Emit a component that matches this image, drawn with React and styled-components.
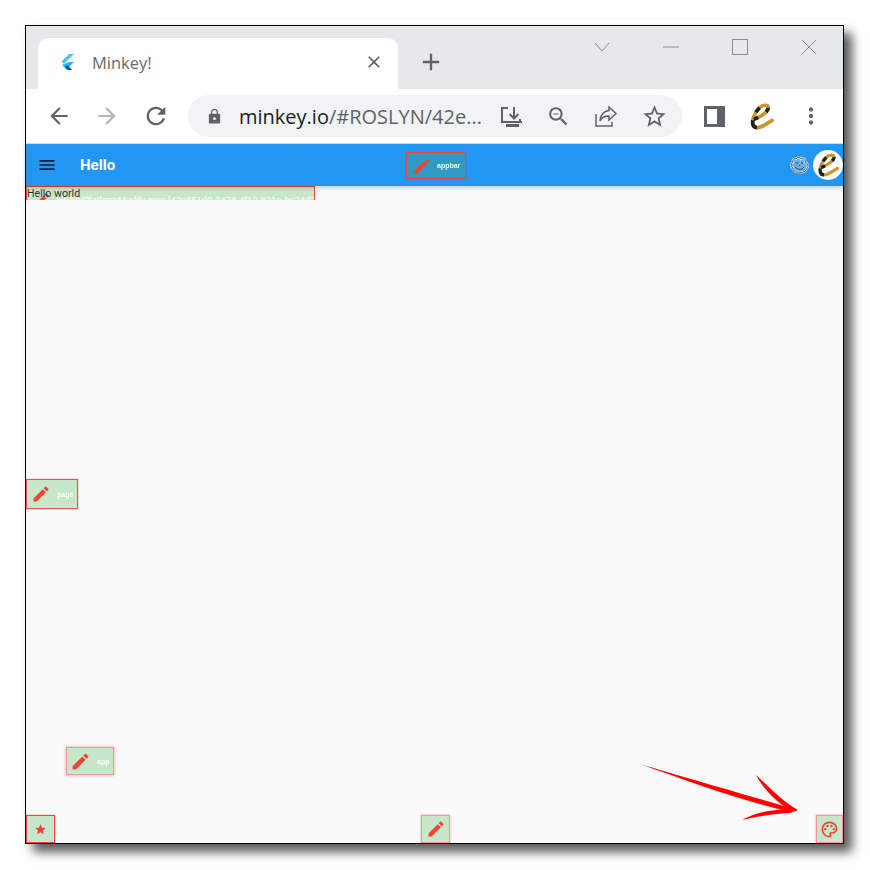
import styled, { createGlobalStyle } from 'styled-components';
import {
  MdEdit,
  MdStar,
  MdMenu,
  MdClose,
  MdAdd,
  MdArrowBack,
  MdArrowForward,
  MdRefresh,
  MdLock,
  MdZoomOut,
  MdStarBorder,
  MdMoreVert,
  MdOutlinePalette,
} from 'react-icons/md';

const GlobalStyle = createGlobalStyle`
  html, body {
    margin: 0;
    padding: 0;
    background: #fff;
    font-family: 'Roboto', 'Liberation Sans', sans-serif;
  }
`;

const Page = styled.div`
  width: 870px;
  height: 870px;
  padding: 25px 0 0 25px;
  box-sizing: border-box;
  overflow: hidden;
`;

const Window = styled.div`
  position: relative;
  width: 819px;
  height: 819px;
  box-sizing: border-box;
  border: 1px solid #000;
  display: flex;
  flex-direction: column;
  background: #fafafa;
  box-shadow: 8px 8px 10px rgba(0, 0, 0, 0.65);
`;

const TabStrip = styled.div`
  height: 63px;
  flex: none;
  background: #e6e9ec;
  display: flex;
  align-items: flex-end;
  padding-left: 12px;
`;

const Tab = styled.div`
  width: 360px;
  height: 51px;
  box-sizing: border-box;
  background: #fff;
  border-radius: 10px 10px 0 0;
  display: flex;
  align-items: center;
  padding: 0 14px 3px 20px;
  color: #5f6368;
`;

const TabTitle = styled.span`
  flex: 1;
  margin-left: 15px;
  font-family: 'Open Sans', sans-serif;
  font-size: 16.5px;
  color: #676a6e;
`;

const NewTab = styled.div`
  display: flex;
  align-items: center;
  height: 51px;
  margin-left: 19px;
  padding-bottom: 3px;
  box-sizing: border-box;
  color: #5f6368;
`;

const WindowControls = styled.div`
  margin-left: auto;
  align-self: flex-start;
  display: flex;
  align-items: center;
  height: 42px;
  padding-right: 26px;
  gap: 53px;
`;

const ToolBar = styled.div`
  height: 55px;
  flex: none;
  box-sizing: border-box;
  background: #fff;
  border-bottom: 1px solid #dadce0;
  display: flex;
  align-items: center;
  padding: 0 19px 0 20px;
  color: #5f6368;
`;

const NavIcons = styled.div`
  display: flex;
  align-items: center;
  gap: 22px;
  width: 142px;
  flex: none;
`;

const Omnibox = styled.div`
  width: 494px;
  height: 42px;
  flex: none;
  box-sizing: border-box;
  border-radius: 21px;
  background: #f1f3f4;
  display: flex;
  align-items: center;
  padding: 0 14px 0 18px;
`;

const Url = styled.span`
  margin-left: 16px;
  flex: 1;
  font-family: 'Open Sans', sans-serif;
  font-size: 20px;
  color: #202124;
  white-space: nowrap;

  span {
    color: #5f6368;
  }
`;

const OmniIcons = styled.div`
  display: flex;
  align-items: center;
  gap: 23px;
`;

const ExtIcons = styled.div`
  display: flex;
  align-items: center;
  margin-left: 22px;
  gap: 23px;
`;

const AppBar = styled.div`
  position: relative;
  height: 42px;
  flex: none;
  background: #2196f3;
  display: flex;
  align-items: center;
  padding-left: 11px;
  color: #fff;
  z-index: 1;
  box-shadow: 0 2px 4px rgba(0, 0, 0, 0.18);
`;

const AppTitle = styled.span`
  margin-left: 23px;
  font-family: 'Roboto', sans-serif;
  font-size: 15px;
  font-weight: 700;
`;

const AppActions = styled.div`
  margin-left: auto;
  display: flex;
  align-items: center;
  gap: 3px;
`;

const Avatar = styled.div`
  width: 30px;
  height: 30px;
  border-radius: 50%;
  background: #fff;
  display: flex;
  align-items: center;
  justify-content: center;
`;

const Body = styled.div`
  position: relative;
  flex: 1;
`;

const ClipBar = styled.div`
  height: 14px;
  width: 289px;
  box-sizing: border-box;
  position: relative;
  background: #c8e6c9;
  border: 1px solid #f44336;
  border-bottom: 0;
  overflow: hidden;
`;

const ClipText = styled.span`
  position: absolute;
  left: 29px;
  top: 7px;
  font-family: 'Liberation Sans', sans-serif;
  font-size: 9.4px;
  color: #fff;
  white-space: nowrap;
`;

const ClipPencil = styled.span`
  position: absolute;
  left: 6px;
  top: 4px;
  color: #f44336;
  display: flex;
`;

const HelloText = styled.span`
  position: absolute;
  left: 1px;
  top: 1px;
  font-family: 'Roboto', 'Liberation Sans', sans-serif;
  font-size: 10.6px;
  line-height: 14px;
  color: #333;
`;

const EditChip = styled.div`
  position: absolute;
  left: ${(p) => p.$x}px;
  top: ${(p) => p.$y}px;
  width: ${(p) => p.$w}px;
  height: ${(p) => p.$h}px;
  box-sizing: border-box;
  background: ${(p) => p.$bg || '#c8e6c9'};
  border: 1px solid ${(p) => p.$line || '#ef9a9a'};
  box-shadow: 0 0 ${(p) => p.$glow || 2}px ${(p) => p.$line || 'rgba(239, 83, 80, 0.6)'};
  display: flex;
  align-items: center;
  justify-content: ${(p) => (p.$center ? 'center' : 'flex-start')};
  padding-left: ${(p) => (p.$center ? 0 : p.$pad || 4)}px;
  color: #f44336;
  z-index: 2;
`;

const ChipLabel = styled.span`
  margin-left: ${(p) => p.$gap || 6}px;
  font-family: 'Liberation Sans', sans-serif;
  font-size: 7px;
  font-weight: 700;
  color: #fff;
  opacity: 0.9;
`;

const ArrowMark = styled.svg`
  position: absolute;
  left: 614px;
  top: 738px;
  z-index: 3;
  filter: blur(0.7px);
`;

function FlutterLogo() {
  return (
    <svg width="19" height="19" viewBox="0 0 19 19">
      <path d="M11 1h5L6 11 3.500 8.500z" fill="#4fc3f7" />
      <path d="M11 9h5l-5 5 3 3h-5l-5-5z" fill="#29b6f6" />
      <path d="M9 12l2 2-2 2-2-2z" fill="#0d47a1" />
      <path d="M11 14l3 3h-5z" fill="#01579b" />
    </svg>
  );
}

const E_PATH = 'M6 17C11 15 21 10 21 5C21 1 15 2 12 5C7 10 4 17 5 22C6 27 12 26 17 23L25 18';

function ELogo({ size = 28 }) {
  return (
    <svg width={size} height={size} viewBox="0 0 28 28" fill="none">
      <path d={E_PATH} stroke="#c9962f" strokeWidth="3.800" strokeLinecap="round" />
      <path d={E_PATH} stroke="#1b1f2a" strokeWidth="3.800" strokeDasharray="5 10 5 11 6 9 10 40" />
    </svg>
  );
}

function InstallIcon() {
  return (
    <svg width="23" height="23" viewBox="0 0 23 23" fill="none" stroke="#5f6368" strokeWidth="2">
      <path d="M8 3H2v14h5" />
      <path d="M14 2v11M9.500 9l4.500 4.500L18.500 9" />
      <path d="M20 17v-3M7 17h15" />
      <path d="M6 20.500h13" strokeWidth="3" />
    </svg>
  );
}

function ShareIcon() {
  return (
    <svg width="24" height="22" viewBox="0 0 24 22" fill="none" stroke="#5f6368" strokeWidth="1.500">
      <path d="M2 9v12h16v-4" />
      <path d="M15 2l7 6.500-7 6.500v-4c-4 0-7 1-9 5 0-6 4-10 9-10.500z" />
    </svg>
  );
}

function SidePanelIcon() {
  return (
    <svg width="21" height="21" viewBox="0 0 21 21">
      <rect x="0" y="0" width="21" height="21" fill="#5f6368" />
      <rect x="3" y="3" width="10" height="15" fill="#fff" />
    </svg>
  );
}

function WindowIcon({ kind }) {
  return (
    <svg width="16" height="16" viewBox="0 0 16 16" fill="none" stroke="#8a8d91" strokeWidth="1">
      {kind === 'chevron' && <path d="M1 4l7 8 7-8" />}
      {kind === 'min' && <path d="M0 8h16" />}
      {kind === 'max' && <rect x="0.500" y="0.500" width="15" height="15" />}
      {kind === 'close' && <path d="M1 1l14 14M15 1L1 15" />}
    </svg>
  );
}

const MONKEY = 'M3 6C2 3 5 2 6 3C7 1 10 1 11 3C13 1 16 3 15 6C18 7 19 11 17 12C16 16 12 17 9 16C6 17 3 15 3 12C0 11 1 7 3 6z';

function MonkeyIcon() {
  return (
    <svg width="20" height="18" viewBox="0 0 20 18" fill="none" stroke="#39424c" strokeWidth="0.900">
      <path d={MONKEY} fill="#5fb0ee" stroke="#f2f5f7" strokeWidth="2" />
      <path d={MONKEY} />
      <path d="M7 6v2M12 6v2M5 11c3 3 7 3 9 0M9 9.500h1" />
    </svg>
  );
}

function App() {
  return (
    <>
      <GlobalStyle />
      <Page>
        <Window>
          <TabStrip>
            <Tab>
              <FlutterLogo />
              <TabTitle>Minkey!</TabTitle>
              <MdClose size={20} />
            </Tab>
            <NewTab>
              <MdAdd size={28} />
            </NewTab>
            <WindowControls>
              <WindowIcon kind="chevron" />
              <WindowIcon kind="min" />
              <WindowIcon kind="max" />
              <WindowIcon kind="close" />
            </WindowControls>
          </TabStrip>

          <ToolBar>
            <NavIcons>
              <MdArrowBack size={26} />
              <MdArrowForward size={26} color="#b5b7ba" />
              <MdRefresh size={28} />
            </NavIcons>
            <Omnibox>
              <MdLock size={17} />
              <Url>
                minkey.io<span>/#ROSLYN/42e...</span>
              </Url>
              <OmniIcons>
                <InstallIcon />
                <MdZoomOut size={25} />
                <ShareIcon />
                <MdStarBorder size={27} />
              </OmniIcons>
            </Omnibox>
            <ExtIcons>
              <SidePanelIcon />
              <ELogo size={27} />
              <MdMoreVert size={26} />
            </ExtIcons>
          </ToolBar>

          <AppBar>
            <MdMenu size={20} color="#0b1f33" />
            <AppTitle>Hello</AppTitle>
            <EditChip $x={380} $y={8} $w={60} $h={27} $bg="#2d9cc0" $line="#e5473f" $glow={1} $pad={5}>
              <MdEdit size={20} />
              <ChipLabel $gap={5}>appbar</ChipLabel>
            </EditChip>
            <AppActions>
              <MonkeyIcon />
              <Avatar>
                <ELogo size={24} />
              </Avatar>
            </AppActions>
          </AppBar>

          <Body>
            <ClipBar>
              <ClipPencil>
                <MdEdit size={18} />
              </ClipPencil>
              <ClipText>hlp/lib/PlatformModify.mxn [42e851d0-3478-4f12-821e-bc24d2513741.hello]</ClipText>
            </ClipBar>
            <HelloText>Hello world</HelloText>

            <EditChip $x={0} $y={293} $w={52} $h={30} $line="#e5574f" $glow={1} $pad={4}>
              <MdEdit size={20} />
              <ChipLabel $gap={6}>page</ChipLabel>
            </EditChip>
            <EditChip $x={40} $y={561} $w={48} $h={28} $glow={3} $pad={3}>
              <MdEdit size={21} />
              <ChipLabel $gap={6}>app</ChipLabel>
            </EditChip>
            <EditChip $x={0} $y={629} $w={29} $h={28} $line="#f44336" $glow={1} $center>
              <MdStar size={13} />
            </EditChip>
            <EditChip $x={395} $y={629} $w={29} $h={28} $center>
              <MdEdit size={20} />
            </EditChip>
            <EditChip $x={790} $y={629} $w={27} $h={28} $center>
              <MdOutlinePalette size={19} />
            </EditChip>
          </Body>

          <ArrowMark width="160" height="60" viewBox="0 0 160 60">
            <path d="M0 0C40 12 100 29 157 46L150 48C100 36 50 18 0 0z" fill="#ff0000" />
            <path d="M116 11C128 22 142 37 158 46L151 47C137 38 124 26 116 11z" fill="#ff0000" />
            <path d="M102 56C116 48 136 44 158 46L150 49C134 50 118 52 102 56z" fill="#ff0000" />
          </ArrowMark>
        </Window>
      </Page>
    </>
  );
}

export default App;
